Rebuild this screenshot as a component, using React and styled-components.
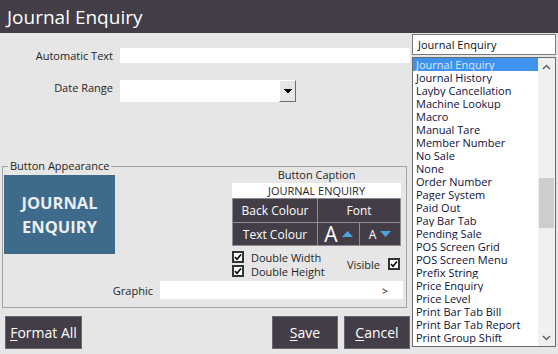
import React from 'react'
import styled, { createGlobalStyle } from 'styled-components'

const GlobalStyle = createGlobalStyle`
  body {
    margin: 0;
    background: #e6e6e6;
    font-family: "Open Sans", "Noto Sans", sans-serif;
  }
`

const ITEMS = [
  'Journal Enquiry', 'Journal History', 'Layby Cancellation', 'Machine Lookup',
  'Macro', 'Manual Tare', 'Member Number', 'No Sale', 'None', 'Order Number',
  'Pager System', 'Paid Out', 'Pay Bar Tab', 'Pending Sale', 'POS Screen Grid',
  'POS Screen Menu', 'Prefix String', 'Price Enquiry', 'Price Level',
  'Print Bar Tab Bill', 'Print Bar Tab Report', 'Print Group Shift',
]

//Styled Components
const Window = styled.div`
  width: 558px;
  height: 354px;
  background: #e6e6e6;
  display: flex;
  flex-direction: column;
  overflow: hidden;
`

const TitleBar = styled.div`
  height: 33px;
  background: #433d47;
  color: #ffffff;
  font-size: 19px;
  display: flex;
  align-items: center;
  padding-left: 7px;
  flex-shrink: 0;
`

const Main = styled.div`
  display: flex;
  flex: 1;
`

const LeftPane = styled.div`
  width: 410px;
  display: flex;
  flex-direction: column;
`

const FieldRow = styled.div`
  display: flex;
  align-items: ${p => p.$alignTop ? 'flex-start' : 'center'};
  margin-top: ${p => p.$top}px;
`

const Label = styled.div`
  width: ${p => p.$width}px;
  margin-right: 7px;
  text-align: right;
  font-size: 11px;
  line-height: 15px;
  color: #1e1e1e;
`

const TextBox = styled.div`
  width: ${p => p.$width}px;
  height: ${p => p.$height}px;
  background: #ffffff;
  box-sizing: border-box;
  display: flex;
  align-items: center;
  justify-content: ${p => p.$center ? 'center' : 'flex-end'};
  font-size: 11px;
  color: #1e1e1e;
`

const DropButton = styled.div`
  width: 17px;
  height: 22px;
  box-sizing: border-box;
  background: #e6e6e6;
  border: 1px solid;
  border-color: #ffffff #6e6e6e #6e6e6e #ffffff;
  display: flex;
  align-items: center;
  justify-content: center;
`

const GroupBox = styled.div`
  position: relative;
  margin: 64px 0 0 2px;
  width: 405px;
  height: 142px;
  box-sizing: border-box;
  border: 1px solid #a3a3a3;
  display: flex;
  flex-direction: column;
`

const Legend = styled.span`
  position: absolute;
  top: -9px;
  left: 5px;
  padding: 0 2px;
  background: #e6e6e6;
  font-size: 11px;
  color: #1e1e1e;
`

const GroupTop = styled.div`
  display: flex;
  align-items: flex-start;
`

const Preview = styled.div`
  width: 111px;
  height: 79px;
  margin: 8px 0 0 1px;
  background: #3e6a8b;
  color: #e9eef2;
  font-weight: 700;
  font-size: 16.5px;
  line-height: 24px;
  display: flex;
  flex-direction: column;
  align-items: center;
  justify-content: center;
`

const CaptionCol = styled.div`
  width: 169px;
  margin-left: auto;
  margin-right: 5px;
  display: flex;
  flex-direction: column;
`

const CaptionTitle = styled.div`
  height: 15px;
  line-height: 15px;
  text-align: center;
  font-size: 11px;
  color: #1e1e1e;
  margin-bottom: 1px;
`

const StyleGrid = styled.div`
  display: grid;
  grid-template-columns: 84px 41px 40px;
  grid-template-rows: 23px 22px;
  gap: 1px;
  padding: 1px;
  background: #8f8a93;
`

const Cell = styled.div`
  grid-column: span ${p => p.$span || 1};
  background: #433d47;
  color: #ffffff;
  font-size: ${p => p.$size || 12}px;
  display: flex;
  align-items: center;
  justify-content: center;
  gap: 4px;
`

const ChecksArea = styled.div`
  display: flex;
  justify-content: space-between;
  align-items: center;
  margin-top: 5px;
`

const CheckColumn = styled.div`
  display: flex;
  flex-direction: column;
  gap: 2px;
`

const CheckRow = styled.div`
  display: flex;
  align-items: center;
  gap: 7px;
  font-size: 11px;
  color: #1e1e1e;
  height: 12px;
`

const CheckBox = styled.div`
  width: 12px;
  height: 12px;
  box-sizing: border-box;
  border: 2px solid #333333;
  background: #ffffff;
  display: flex;
  align-items: center;
  justify-content: center;
`

const VisibleRow = styled(CheckRow)`
  gap: 8px;
  margin-right: 1px;
`

const BottomBar = styled.div`
  display: flex;
  align-items: center;
  margin-top: 8px;
  padding-left: 5px;
  gap: 6px;
`

const ActionButton = styled.div`
  width: ${p => p.$width}px;
  height: 33px;
  box-sizing: border-box;
  background: #433d47;
  border: 1px solid #6a6570;
  color: #ffffff;
  font-size: 14px;
  display: flex;
  align-items: center;
  justify-content: center;
  margin-left: ${p => p.$push ? 'auto' : '0'};
  u { text-decoration: underline; text-underline-offset: 2px; }
`

const RightPane = styled.div`
  width: 144px;
  margin-left: 2px;
  display: flex;
  flex-direction: column;
`

const ComboText = styled.div`
  margin-top: 1px;
  height: 21px;
  box-sizing: border-box;
  border: 1px solid #7a7a7a;
  background: #ffffff;
  font-size: 11px;
  color: #111111;
  display: flex;
  align-items: center;
  padding-left: 5px;
`

const ListBox = styled.div`
  margin-top: 2px;
  height: 290px;
  box-sizing: border-box;
  border: 1px solid #6b6b6b;
  background: #ffffff;
  display: flex;
`

const Items = styled.div`
  flex: 1;
  overflow: hidden;
`

const Item = styled.div`
  height: 13px;
  line-height: 13px;
  padding-left: 3px;
  font-size: 11px;
  white-space: nowrap;
  overflow: hidden;
  color: ${p => p.$selected ? '#d6e9ff' : '#10103a'};
  background: ${p => p.$selected ? '#3f93ee' : 'transparent'};
`

const ScrollBar = styled.div`
  width: 17px;
  background: #f0f0f0;
  display: flex;
  flex-direction: column;
`

const ScrollArrow = styled.div`
  height: 17px;
  display: flex;
  align-items: center;
  justify-content: center;
`

const Track = styled.div`
  flex: 1;
`

const Thumb = styled.div`
  margin: 103px 1px 0 1px;
  height: 50px;
  background: #cdcdcd;
`

const DownTriangle = () => (
  <svg width="8" height="5" viewBox="0 0 8 5">
    <path d="M0 0h8v1h-1v1h-1v1h-1v1h-2v-1h-1v-1h-1v-1h-1z" fill="#000" />
  </svg>
)

const Tick = () => (
  <svg width="8" height="8" viewBox="0 0 8 8">
    <path d="M1 4l2 2.2L7 1.5" stroke="#000" strokeWidth="1.6" fill="none" />
  </svg>
)

const Chevron = ({ down }) => (
  <svg width="9" height="6" viewBox="0 0 9 6">
    <path d={down ? 'M1 1l3.5 3.5L8 1' : 'M1 5l3.5-3.5L8 5'} stroke="#606060" strokeWidth="1.5" fill="none" />
  </svg>
)

const BlueArrow = ({ down }) => (
  <svg width="11" height="6" viewBox="0 0 11 6">
    <path d={down ? 'M0 0h11l-5.5 6z' : 'M0 6h11l-5.5-6z'} fill="#4aa3e2" />
  </svg>
)

//App Component
const App = () => {
  return (
    <Window>
      <GlobalStyle />
      <TitleBar>Journal Enquiry</TitleBar>
      <Main>
        <LeftPane>
          <FieldRow $top={15}>
            <Label $width={113}>Automatic Text</Label>
            <TextBox $width={290} $height={15} />
          </FieldRow>
          <FieldRow $top={17} $alignTop>
            <Label $width={113}>Date Range</Label>
            <TextBox $width={159} $height={22} />
            <DropButton><DownTriangle /></DropButton>
          </FieldRow>

          <GroupBox>
            <Legend>Button Appearance</Legend>
            <GroupTop>
              <Preview>
                <span>JOURNAL</span>
                <span>ENQUIRY</span>
              </Preview>
              <CaptionCol>
                <CaptionTitle>Button Caption</CaptionTitle>
                <TextBox $width={169} $height={15} $center>JOURNAL ENQUIRY</TextBox>
                <StyleGrid>
                  <Cell>Back Colour</Cell>
                  <Cell $span={2}>Font</Cell>
                  <Cell>Text Colour</Cell>
                  <Cell $size={21}>A <BlueArrow /></Cell>
                  <Cell $size={12}>A <BlueArrow down /></Cell>
                </StyleGrid>
                <ChecksArea>
                  <CheckColumn>
                    <CheckRow><CheckBox><Tick /></CheckBox>Double Width</CheckRow>
                    <CheckRow><CheckBox><Tick /></CheckBox>Double Height</CheckRow>
                  </CheckColumn>
                  <VisibleRow>Visible<CheckBox><Tick /></CheckBox></VisibleRow>
                </ChecksArea>
              </CaptionCol>
            </GroupTop>
            <FieldRow $top={4}>
              <Label $width={150}>Graphic</Label>
              <TextBox $width={243} $height={18}>
                <span style={{ marginRight: 15 }}>&gt;</span>
              </TextBox>
            </FieldRow>
          </GroupBox>

          <BottomBar>
            <ActionButton $width={77}><span><u>F</u>ormat All</span></ActionButton>
            <ActionButton $width={66} $push><span><u>S</u>ave</span></ActionButton>
            <ActionButton $width={66}><span><u>C</u>ancel</span></ActionButton>
          </BottomBar>
        </LeftPane>

        <RightPane>
          <ComboText>Journal Enquiry</ComboText>
          <ListBox>
            <Items>
              {ITEMS.map((it, i) => (
                <Item key={it} $selected={i === 0}>{it}</Item>
              ))}
            </Items>
            <ScrollBar>
              <ScrollArrow><Chevron /></ScrollArrow>
              <Track><Thumb /></Track>
              <ScrollArrow><Chevron down /></ScrollArrow>
            </ScrollBar>
          </ListBox>
        </RightPane>
      </Main>
    </Window>
  )
}

export default App
